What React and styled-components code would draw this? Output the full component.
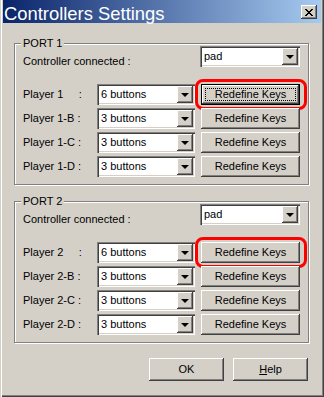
import React from 'react'
import styled, { createGlobalStyle, css } from 'styled-components'

const FACE = '#d4d0c8'

const GlobalStyle = createGlobalStyle`
  html, body {
    margin: 0;
    padding: 0;
    background: ${FACE};
  }
  body {
    font-family: 'Liberation Sans', Arial, sans-serif;
    font-size: 11px;
    color: #000;
  }
`

const raised = css`
  background: ${FACE};
  box-shadow: inset -1px -1px #404040, inset 1px 1px #fff, inset -2px -2px #808080, inset 2px 2px ${FACE};
`

const Window = styled.div`
  box-sizing: border-box;
  width: 324px;
  height: 397px;
  padding: 0 3px 3px 3px;
  background: ${FACE};
  box-shadow: inset 1px 0 ${FACE}, inset 2px 0 #fff, inset -1px -1px #404040, inset -2px -2px #808080;
  display: flex;
  flex-direction: column;
`

const TitleBar = styled.div`
  height: 23px;
  flex: none;
  display: flex;
  align-items: flex-start;
  justify-content: space-between;
  padding: 0 4px 0 1px;
  background: linear-gradient(to right, #0a246a, #a6caf0);
`

const Title = styled.div`
  color: #fff;
  font-size: 18.4px;
  line-height: 19px;
  padding-top: 4px;
  white-space: nowrap;
`

const CloseButton = styled.div`
  ${raised};
  width: 16px;
  height: 14px;
  margin-top: 5px;
  display: flex;
  align-items: center;
  justify-content: center;
`

const Group = styled.div`
  position: relative;
  margin: ${p => p.$top}px 12px 0 11px;
  border: 1px solid #808080;
  box-shadow: inset 1px 1px #fff, 1px 1px #fff;
  padding: 2px 8px 7px 8px;
  display: flex;
  flex-direction: column;
`

const Legend = styled.div`
  position: absolute;
  top: -7px;
  left: 6px;
  padding: 0 2px;
  line-height: 13px;
  background: ${FACE};
`

const HeaderRow = styled.div`
  display: flex;
  justify-content: space-between;
  align-items: flex-start;
  margin-bottom: 16px;
`

const HeaderLabel = styled.div`
  line-height: 13px;
  margin-top: 9px;
`

const Rows = styled.div`
  display: flex;
  flex-direction: column;
  gap: 3px;
`

const Row = styled.div`
  display: flex;
  align-items: center;
  height: 21px;
`

const Label = styled.div`
  width: 74px;
  white-space: pre;
  line-height: 13px;
`

const ComboBox = styled.div`
  box-sizing: border-box;
  width: ${p => p.$width}px;
  height: 21px;
  padding: 2px;
  background: #fff;
  box-shadow: inset 1px 1px #808080, inset 2px 2px #404040, inset -1px -1px #fff, inset -2px -2px ${FACE};
  display: flex;
  align-items: center;
`

const ComboValue = styled.div`
  flex: 1;
  padding-left: 2px;
  line-height: 13px;
`

const DropButton = styled.div`
  ${raised};
  width: 16px;
  height: 17px;
  display: flex;
  align-items: center;
  justify-content: center;
`

const Arrow = styled.div`
  width: 0;
  height: 0;
  border-left: 4px solid transparent;
  border-right: 4px solid transparent;
  border-top: 4px solid #000;
  margin-top: 1px;
`

const Button = styled.div`
  ${raised};
  position: relative;
  box-sizing: border-box;
  width: ${p => p.$width}px;
  height: ${p => p.$height}px;
  margin-left: ${p => p.$gap || 0}px;
  display: flex;
  align-items: center;
  justify-content: center;
  line-height: 13px;

  ${p => p.$default && css`
    box-shadow: inset 0 0 0 1px #000, inset -2px -2px #404040, inset 2px 2px #fff, inset -3px -3px #808080;
    &::before {
      content: '';
      position: absolute;
      inset: 4px;
      border: 1px dotted #000;
    }
  `}

  ${p => p.$marked && css`
    &::after {
      content: '';
      position: absolute;
      top: -5px;
      bottom: -5px;
      left: -6px;
      right: -7px;
      border: 3px solid #ff0000;
      border-radius: 8px;
      filter: blur(0.6px);
    }
  `}
`

const Footer = styled.div`
  display: flex;
  justify-content: flex-end;
  gap: 9px;
  margin: 15px 13px 0 0;
`

const Underline = styled.span`
  text-decoration: underline;
`

const Combo = ({ value, width }) => (
  <ComboBox $width={width}>
    <ComboValue>{value}</ComboValue>
    <DropButton><Arrow /></DropButton>
  </ComboBox>
)

const ports = [
  {
    name: 'PORT 1',
    top: 20,
    players: [
      { label: 'Player 1     :', mode: '6 buttons', marked: true, isDefault: true },
      { label: 'Player 1-B :', mode: '3 buttons' },
      { label: 'Player 1-C :', mode: '3 buttons' },
      { label: 'Player 1-D :', mode: '3 buttons' },
    ],
  },
  {
    name: 'PORT 2',
    top: 16,
    players: [
      { label: 'Player 2     :', mode: '6 buttons', marked: true },
      { label: 'Player 2-B :', mode: '3 buttons' },
      { label: 'Player 2-C :', mode: '3 buttons' },
      { label: 'Player 2-D :', mode: '3 buttons' },
    ],
  },
]

const App = () => (
  <>
    <GlobalStyle />
    <Window>
      <TitleBar>
        <Title>Controllers Settings</Title>
        <CloseButton>
          <svg width="8" height="7" viewBox="0 0 8 7" shapeRendering="crispEdges">
            <path d="M0 0h2v1h-2zM6 0h2v1h-2zM1 1h2v1h-2zM5 1h2v1h-2zM2 2h4v1h-4zM3 3h2v1h-2zM2 4h4v1h-4zM1 5h2v1h-2zM5 5h2v1h-2zM0 6h2v1h-2zM6 6h2v1h-2z" fill="#000" />
          </svg>
        </CloseButton>
      </TitleBar>

      {ports.map(port => (
        <Group key={port.name} $top={port.top}>
          <Legend>{port.name}</Legend>
          <HeaderRow>
            <HeaderLabel>Controller connected :</HeaderLabel>
            <Combo value="pad" width={100} />
          </HeaderRow>
          <Rows>
            {port.players.map(player => (
              <Row key={player.label}>
                <Label>{player.label}</Label>
                <Combo value={player.mode} width={98} />
                <Button $width={99} $height={21} $gap={6} $marked={player.marked} $default={player.isDefault}>
                  Redefine Keys
                </Button>
              </Row>
            ))}
          </Rows>
        </Group>
      ))}

      <Footer>
        <Button $width={75} $height={23}>OK</Button>
        <Button $width={75} $height={23}><Underline>H</Underline>elp</Button>
      </Footer>
    </Window>
  </>
)

export default App
